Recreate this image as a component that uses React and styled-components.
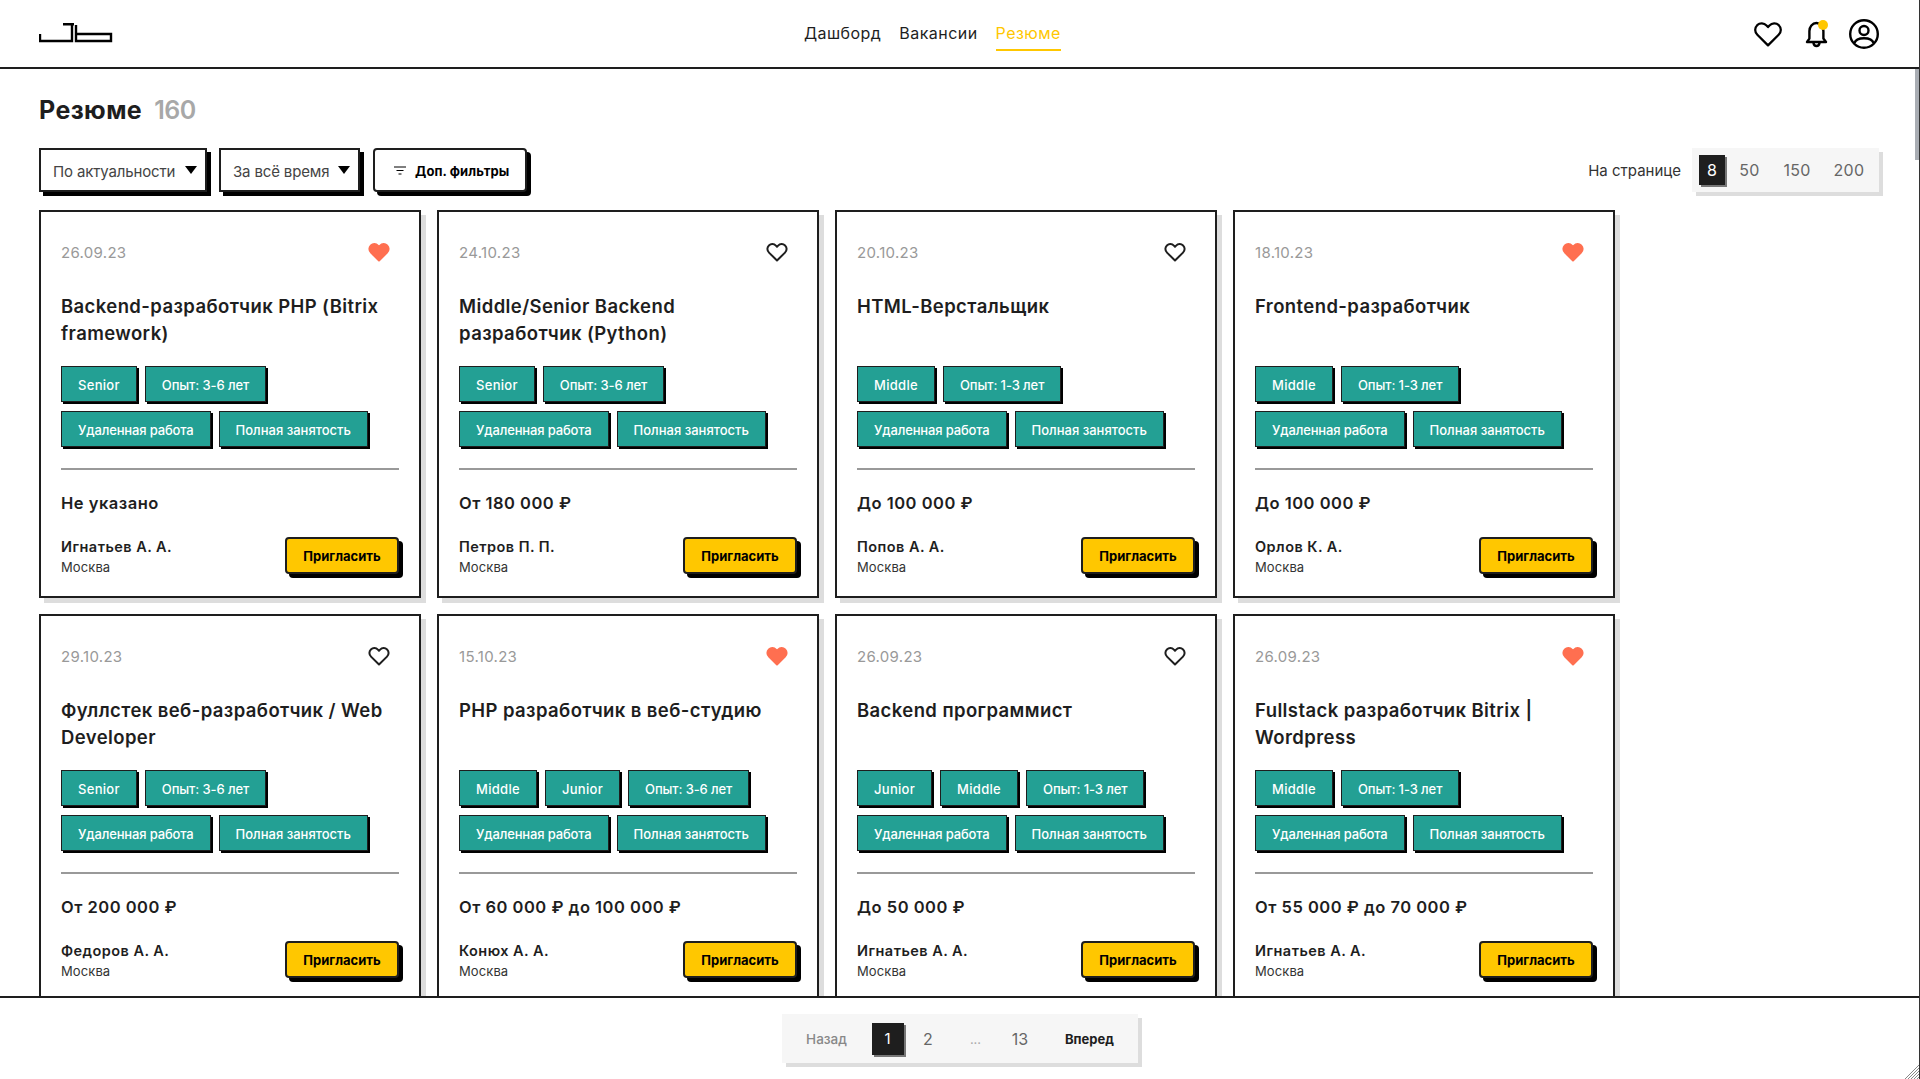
import React from "react";
import styled, { createGlobalStyle } from "styled-components";

const Global = createGlobalStyle`
  html, body { margin: 0; padding: 0; height: 100%; overflow: hidden; background: #fff; }
  body { font-family: Inter, "Noto Sans", sans-serif; color: #1e1e1e; }
  * { box-sizing: border-box; }
`;

const App_ = styled.div`
  position: relative;
  display: flex;
  flex-direction: column;
  height: 100vh;
  border-right: 1px solid #333;
  overflow: hidden;
`;
const Header = styled.header`
  position: relative;
  flex: none;
  height: 69px;
  border-bottom: 2px solid #1e1e1e;
  padding: 0 39px;
  display: flex;
  align-items: center;
  justify-content: space-between;
`;
const Logo = styled.svg`
  display: block;
  width: 74px;
  height: 20px;
  margin-top: -1px;
`;
const Nav = styled.nav`
  position: absolute;
  left: 804px;
  top: 0;
  height: 67px;
  display: flex;
  gap: 18px;
`;
const NavItem = styled.a`
  position: relative;
  font-size: 16px;
  line-height: 67px;
  letter-spacing: 0.45px;
  color: ${(p) => (p.$active ? "#ffc700" : "#1e1e1e")};
  &::after {
    content: "";
    display: ${(p) => (p.$active ? "block" : "none")};
    position: absolute;
    left: 0;
    right: 0;
    top: 49px;
    height: 2px;
    background: #ffc700;
  }
`;
const IconBar = styled.div`
  display: flex;
  align-items: center;
  gap: 16px;
`;
const IconBtn = styled.span`
  position: relative;
  display: block;
  width: 32px;
  height: 32px;
  svg { display: block; }
`;
const Dot = styled.i`
  position: absolute;
  right: 4px;
  top: 2px;
  width: 10px;
  height: 10px;
  border-radius: 50%;
  background: #ffc700;
`;
const Main = styled.main`
  flex: 1;
  min-height: 0;
  overflow: hidden;
  padding: 25px 39px 0;
`;
const TitleRow = styled.div`
  display: flex;
  align-items: baseline;
  gap: 12px;
  height: 32px;
  line-height: 32px;
`;
const Title = styled.h1`
  margin: 0;
  font-size: 25px;
  font-weight: 700;
  letter-spacing: 0.4px;
  color: #1e1e1e;
`;
const Count = styled.span`
  font-size: 25px;
  font-weight: 600;
  color: #a8a8a8;
  letter-spacing: -0.5px;
`;
const Toolbar = styled.div`
  display: flex;
  align-items: flex-start;
  margin-top: 22px;
  height: 44px;
`;
const Select = styled.div`
  display: flex;
  align-items: center;
  justify-content: space-between;
  height: 44px;
  width: ${(p) => p.$w}px;
  margin-right: 12px;
  padding: 2px 8px 0 12px;
  border: 2px solid #1e1e1e;
  box-shadow: 4px 4px 0 #000;
  background: #fff;
  font-size: 15px;
  letter-spacing: -0.15px;
  color: #444;
  white-space: nowrap;
`;
const Caret = styled.i`
  width: 0;
  height: 0;
  margin-top: -3px;
  border-left: 6.5px solid transparent;
  border-right: 6.5px solid transparent;
  border-top: 8px solid #000;
`;
const FilterBtn = styled.button`
  display: flex;
  align-items: center;
  gap: 8px;
  height: 44px;
  width: 154px;
  margin-left: 1px;
  padding: 2px 0 0 18px;
  border: 2px solid #1e1e1e;
  border-radius: 4px;
  box-shadow: 4px 4px 0 #000;
  background: #fff;
  font-family: inherit;
  font-size: 13px;
  letter-spacing: 0.1px;
  font-weight: 700;
  color: #000;
  white-space: nowrap;
`;
const PerPage = styled.div`
  margin-left: auto;
  margin-right: 1px;
  display: flex;
  align-items: center;
  gap: 11px;
  height: 44px;
`;
const PerLabel = styled.span`
  margin-top: 1px;
  font-size: 15px;
  color: #333;
`;
const Segment = styled.div`
  display: flex;
  align-items: center;
  height: ${(p) => p.$h}px;
  width: ${(p) => p.$w}px;
  padding-left: ${(p) => p.$pl}px;
  background: #f6f6f6;
  box-shadow: 4px 4px 0 #ddd;
`;
const PageCell = styled.span`
  flex: none;
  display: flex;
  align-items: center;
  justify-content: center;
  width: ${(p) => p.$w}px;
  height: ${(p) => (p.$active ? p.$ah : 30)}px;
  font-size: ${(p) => p.$fs || 16}px;
  font-weight: ${(p) => p.$weight || 400};
  letter-spacing: ${(p) => p.$ls || 0}px;
  color: ${(p) => (p.$active ? "#fff" : p.$color || "#666")};
  background: ${(p) => (p.$active ? "#1e1e1e" : "transparent")};
  box-shadow: ${(p) => (p.$active ? "2px 2px 0 #777" : "none")};
`;
const Grid = styled.div`
  display: grid;
  grid-template-columns: repeat(4, 382px);
  gap: 16px;
  margin-top: 18px;
`;
const Card = styled.article`
  display: flex;
  flex-direction: column;
  height: 388px;
  padding: 28px 20px 0;
  border: 2px solid #1e1e1e;
  background: #fff;
  box-shadow: 5px 5px 0 #ddd;
`;
const CardTop = styled.div`
  display: flex;
  align-items: center;
  justify-content: space-between;
  height: 24px;
`;
const DateText = styled.span`
  font-size: 15px;
  letter-spacing: 0.3px;
  color: #999;
`;
const HeartWrap = styled.span`
  display: block;
  width: 24px;
  height: 24px;
  margin-right: 8px;
  svg { display: block; }
`;
const CardTitle = styled.h2`
  margin: 29px 0 0;
  height: 54px;
  font-size: 18.5px;
  line-height: 27px;
  letter-spacing: 0.4px;
  font-weight: 600;
  color: #1e1e1e;
`;
const Tags = styled.div`
  margin-top: 19px;
  display: flex;
  flex-direction: column;
  gap: 9px;
`;
const TagRow = styled.div`
  display: flex;
  gap: 8px;
`;
const Tag = styled.span`
  display: flex;
  align-items: center;
  height: 36px;
  padding: 1px 16px 0;
  background: #23a094;
  border: 1px solid #1e1e1e;
  box-shadow: 2px 2px 0 #000;
  color: #fff;
  font-size: 13px;
  font-weight: 500;
  letter-spacing: ${(p) => p.$ls}px;
  white-space: nowrap;
`;
const Divider = styled.hr`
  margin: 21px 0 0;
  height: 2px;
  border: 0;
  background: #999;
`;
const Salary = styled.div`
  margin-top: 21px;
  height: 24px;
  line-height: 24px;
  font-size: 16.5px;
  letter-spacing: 0.5px;
  font-weight: 600;
  color: #1e1e1e;
`;
const CardBottom = styled.div`
  margin-top: 22px;
  display: flex;
  align-items: center;
  justify-content: space-between;
  height: 37px;
`;
const Person = styled.div`
  display: flex;
  flex-direction: column;
  gap: 3px;
  margin-top: 2px;
`;
const PersonName = styled.span`
  font-size: 14.5px;
  line-height: 18px;
  letter-spacing: 0.45px;
  font-weight: 600;
`;
const City = styled.span`
  font-size: 13px;
  line-height: 16px;
  letter-spacing: 0.1px;
  color: #333;
`;
const Invite = styled.button`
  width: 114px;
  height: 37px;
  padding: 0;
  border: 2px solid #1e1e1e;
  border-radius: 4px;
  background: #ffc700;
  box-shadow: 4px 4px 0 #000;
  font-family: inherit;
  font-size: 13px;
  font-weight: 700;
  color: #000;
`;
const Footer = styled.footer`
  flex: none;
  height: 83px;
  border-top: 2px solid #1e1e1e;
  background: #fff;
  display: flex;
  justify-content: center;
  padding: 16px 0 0 0;
`;
const Thumb = styled.i`
  position: absolute;
  right: 0;
  top: 69px;
  width: 4px;
  height: 91px;
  background: #a9adb3;
`;
const Grip = styled.svg`
  position: absolute;
  right: 0;
  bottom: 0;
  width: 14px;
  height: 14px;
`;

const HeartPath = "M12 20.5 4 12.6C1.9 10.5 1.9 7.3 3.9 5.4 5.9 3.6 9 3.7 10.9 5.6L12 6.8l1.1-1.2c1.9-1.9 5-2 7-.2 2 1.9 2 5.1-.1 7.2L12 20.5Z";

const HeartIcon = ({ filled, size = 24 }) => (
  <svg width={size} height={size} viewBox="0 0 24 24">
    <path
      d={HeartPath}
      fill={filled ? "#ff6f50" : "none"}
      stroke={filled ? "#ff6f50" : "#1e1e1e"}
      strokeWidth="2"
      strokeLinejoin="round"
    />
  </svg>
);

const cards = [
  { d: "26.09.23", fav: true, t: "Backend-разработчик PHP (Bitrix framework)", tags: ["Senior"], exp: "Опыт: 3-6 лет", s: "Не указано", n: "Игнатьев А. А." },
  { d: "24.10.23", t: "Middle/Senior Backend разработчик (Python)", tags: ["Senior"], exp: "Опыт: 3-6 лет", s: "От 180 000 ₽", n: "Петров П. П." },
  { d: "20.10.23", t: "HTML-Верстальщик", tags: ["Middle"], exp: "Опыт: 1-3 лет", s: "До 100 000 ₽", n: "Попов А. А." },
  { d: "18.10.23", fav: true, t: "Frontend-разработчик", tags: ["Middle"], exp: "Опыт: 1-3 лет", s: "До 100 000 ₽", n: "Орлов К. А." },
  { d: "29.10.23", t: "Фуллстек веб-разработчик / Web Developer", tags: ["Senior"], exp: "Опыт: 3-6 лет", s: "От 200 000 ₽", n: "Федоров А. А." },
  { d: "15.10.23", fav: true, t: "PHP разработчик в веб-студию", tags: ["Middle", "Junior"], exp: "Опыт: 3-6 лет", s: "От 60 000 ₽ до 100 000 ₽", n: "Конюх А. А." },
  { d: "26.09.23", t: "Backend программист", tags: ["Junior", "Middle"], exp: "Опыт: 1-3 лет", s: "До 50 000 ₽", n: "Игнатьев А. А." },
  { d: "26.09.23", fav: true, t: "Fullstack разработчик Bitrix | Wordpress", tags: ["Middle"], exp: "Опыт: 1-3 лет", s: "От 55 000 ₽ до 70 000 ₽", n: "Игнатьев А. А." },
];

export default function App() {
  return (
    <App_>
      <Global />
      <Header>
        <Logo viewBox="0 0 74 20">
          <path d="M1 11v7h32V2M24 1.2h11" fill="none" stroke="#000" strokeWidth="2.4" />
          <path d="M37 2v16h35v-7H37" fill="none" stroke="#000" strokeWidth="2.4" />
        </Logo>
        <Nav>
          <NavItem>Дашборд</NavItem>
          <NavItem>Вакансии</NavItem>
          <NavItem $active>Резюме</NavItem>
        </Nav>
        <IconBar>
          <IconBtn>
            <svg width="32" height="32" viewBox="0 0 24 24">
              <path d={HeartPath} fill="none" stroke="#000" strokeWidth="1.7" strokeLinejoin="round" />
            </svg>
          </IconBtn>
          <IconBtn>
            <svg width="32" height="32" viewBox="0 0 32 32" fill="none" stroke="#000" strokeWidth="2.4" strokeLinecap="round" strokeLinejoin="round">
              <path d="M7 24h19l-2.6-3.4V13c0-4.2-3-8-7-8s-7 3.800-7 8v7.600L7 24Z" />
              <path d="M13.500 25c.3 2 1.500 3 3 3s2.700-1 3-3" />
            </svg>
            <Dot />
          </IconBtn>
          <IconBtn>
            <svg width="32" height="32" viewBox="0 0 32 32" fill="none" stroke="#000" strokeWidth="2.400">
              <circle cx="16" cy="16" r="13.800" />
              <circle cx="16" cy="12.500" r="4.500" />
              <path d="M6.500 25c1-3.500 4-4.800 9.500-4.800s8.500 1.300 9.500 4.800" />
            </svg>
          </IconBtn>
        </IconBar>
      </Header>
      <Main>
        <TitleRow>
          <Title>Резюме</Title>
          <Count>160</Count>
        </TitleRow>
        <Toolbar>
          <Select $w={168}>
            По актуальности
            <Caret />
          </Select>
          <Select $w={141}>
            За всё время
            <Caret />
          </Select>
          <FilterBtn>
            <svg width="14" height="14" viewBox="0 0 14 14" stroke="#000" strokeWidth="1.200">
              <path d="M1 3h12M3.500 6.500h7M5.500 10h3" />
            </svg>
            Доп. фильтры
          </FilterBtn>
          <PerPage>
            <PerLabel>На странице</PerLabel>
            <Segment $w={187} $h={44} $pl={7}>
              <PageCell $w={26} $active $ah={30}>8</PageCell>
              <PageCell $w={49} $ls={0.3}>50</PageCell>
              <PageCell $w={46} $ls={0.3}>150</PageCell>
              <PageCell $w={58} $ls={0.3}>200</PageCell>
            </Segment>
          </PerPage>
        </Toolbar>
        <Grid>
          {cards.map((c, i) => (
            <Card key={i}>
              <CardTop>
                <DateText>{c.d}</DateText>
                <HeartWrap>
                  <HeartIcon filled={c.fav} />
                </HeartWrap>
              </CardTop>
              <CardTitle>{c.t}</CardTitle>
              <Tags>
                <TagRow>
                  {c.tags.map((t) => (
                    <Tag key={t} $ls={0.3}>{t}</Tag>
                  ))}
                  <Tag $ls={-0.1}>{c.exp}</Tag>
                </TagRow>
                <TagRow>
                  <Tag $ls={-0.15}>Удаленная работа</Tag>
                  <Tag $ls={0}>Полная занятость</Tag>
                </TagRow>
              </Tags>
              <Divider />
              <Salary>{c.s}</Salary>
              <CardBottom>
                <Person>
                  <PersonName>{c.n}</PersonName>
                  <City>Москва</City>
                </Person>
                <Invite>Пригласить</Invite>
              </CardBottom>
            </Card>
          ))}
        </Grid>
      </Main>
      <Footer>
        <Segment $w={356} $h={49} $pl={0}>
          <PageCell $w={90} $fs={13.5} $weight={500} $color="#888">Назад</PageCell>
          <PageCell $w={32} $active $ah={32} $fs={15}>1</PageCell>
          <PageCell $w={49}>2</PageCell>
          <PageCell $w={46} $fs={13} $color="#aaa">...</PageCell>
          <PageCell $w={43}>13</PageCell>
          <PageCell $w={96} $fs={13} $weight={700} $color="#1e1e1e">Вперед</PageCell>
        </Segment>
      </Footer>
      <Thumb />
      <Grip viewBox="0 0 14 14" stroke="#888" strokeWidth="1">
        <path d="M14 0 0 14M14 3 3 14M14 6 6 14M14 9 9 14M14 12l-2 2" />
      </Grip>
    </App_>
  );
}
